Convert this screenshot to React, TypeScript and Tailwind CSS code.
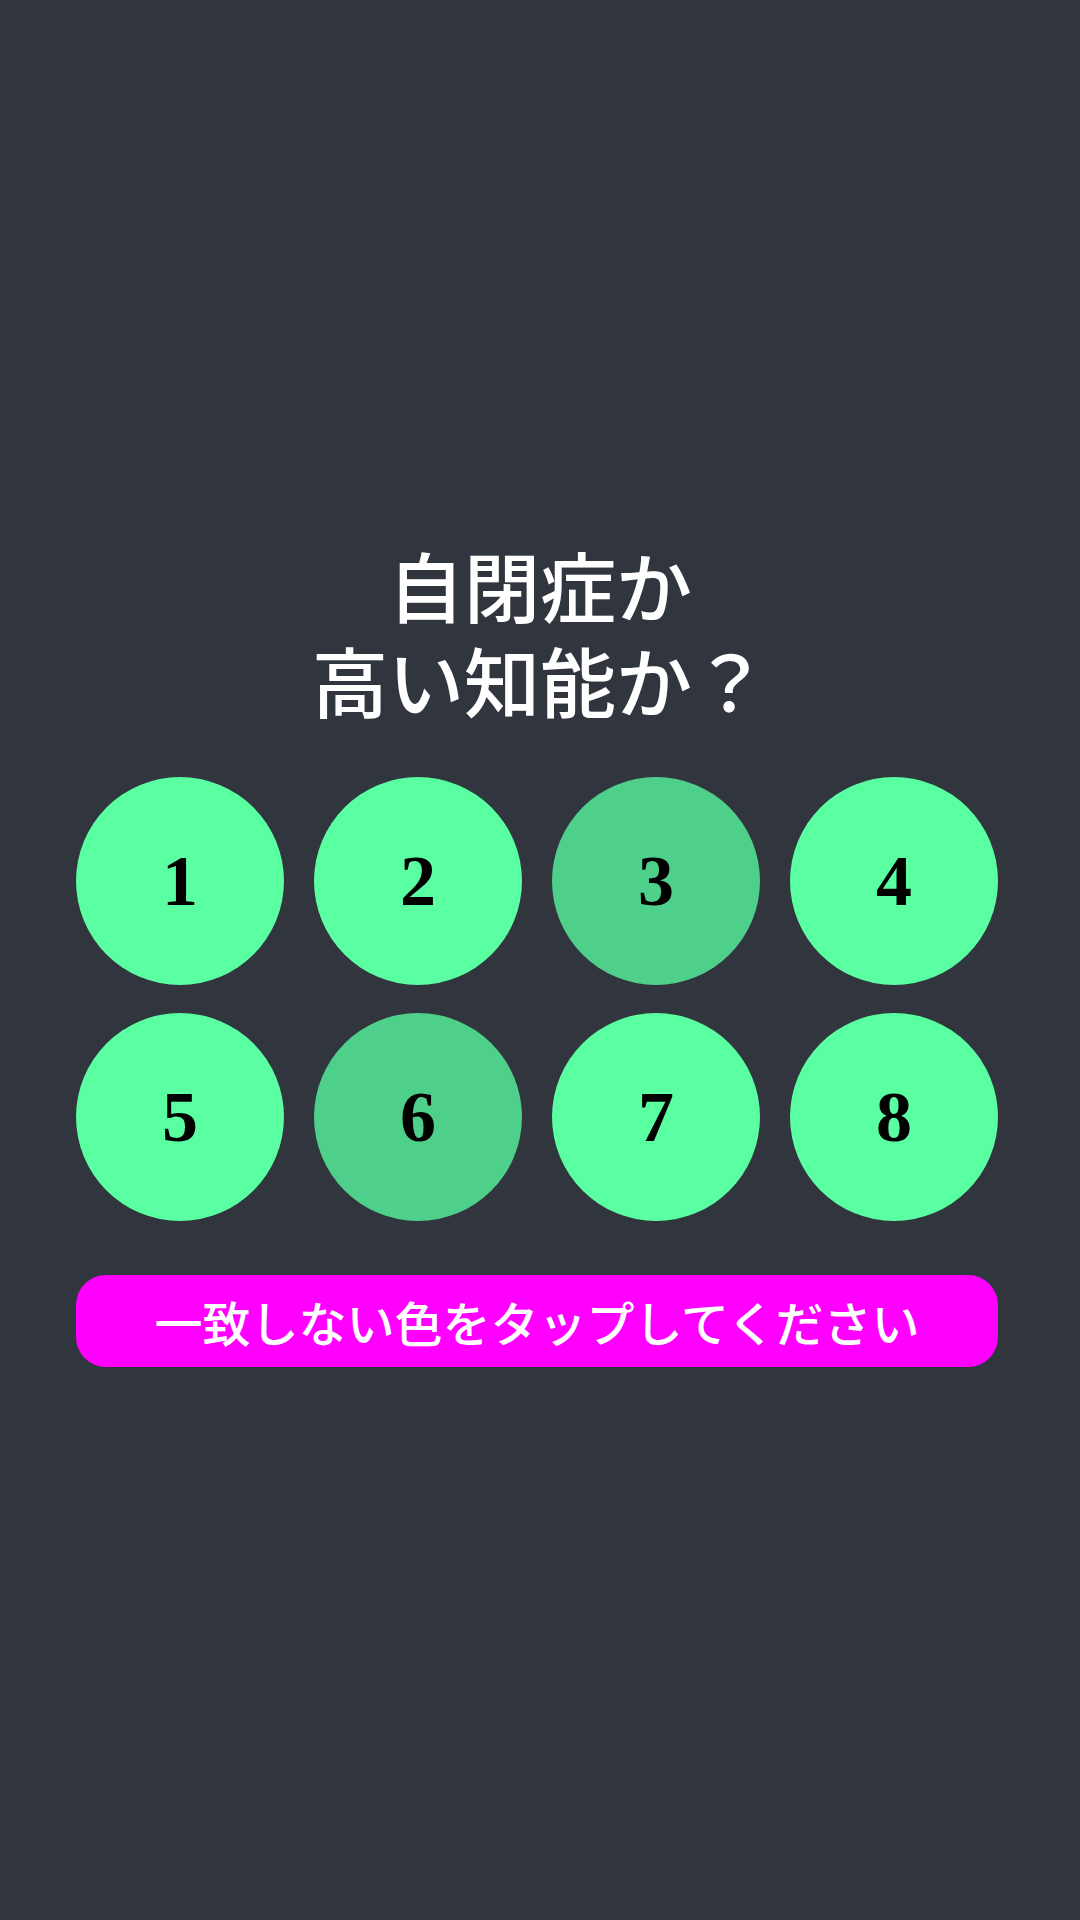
import React from "react";

const cells = [
  { n: 1, odd: false },
  { n: 2, odd: false },
  { n: 3, odd: true },
  { n: 4, odd: false },
  { n: 5, odd: false },
  { n: 6, odd: true },
  { n: 7, odd: false },
  { n: 8, odd: false },
];

export default function App() {
  return (
    <div className="w-[1080px] h-[1920px] bg-[#31353d] flex flex-col px-[76px] pt-[537px] font-['Noto_Sans_CJK_JP','Noto_Sans',sans-serif]">
      <h1 className="text-white text-center text-[76px] leading-[95px] font-medium">
        <div>自閉症か</div>
        <div>高い知能か？</div>
      </h1>

      <div className="mt-[50px] grid grid-cols-[repeat(4,208px)] gap-x-[30px] gap-y-[28px]">
        {cells.map((c) => (
          <button
            key={c.n}
            className={`w-[208px] h-[208px] rounded-full flex items-center justify-center text-black text-[72px] font-bold font-['Liberation_Serif',serif] ${
              c.odd ? "bg-[#4ecf8a]" : "bg-[#5affa2]"
            }`}
          >
            {c.n}
          </button>
        ))}
      </div>

      <div className="mt-[54px] w-[922px] h-[92px] rounded-[30px] bg-[#ff00ff] flex items-center justify-center text-white text-[48px] font-medium">
        一致しない色をタップしてください
      </div>
    </div>
  );
}
